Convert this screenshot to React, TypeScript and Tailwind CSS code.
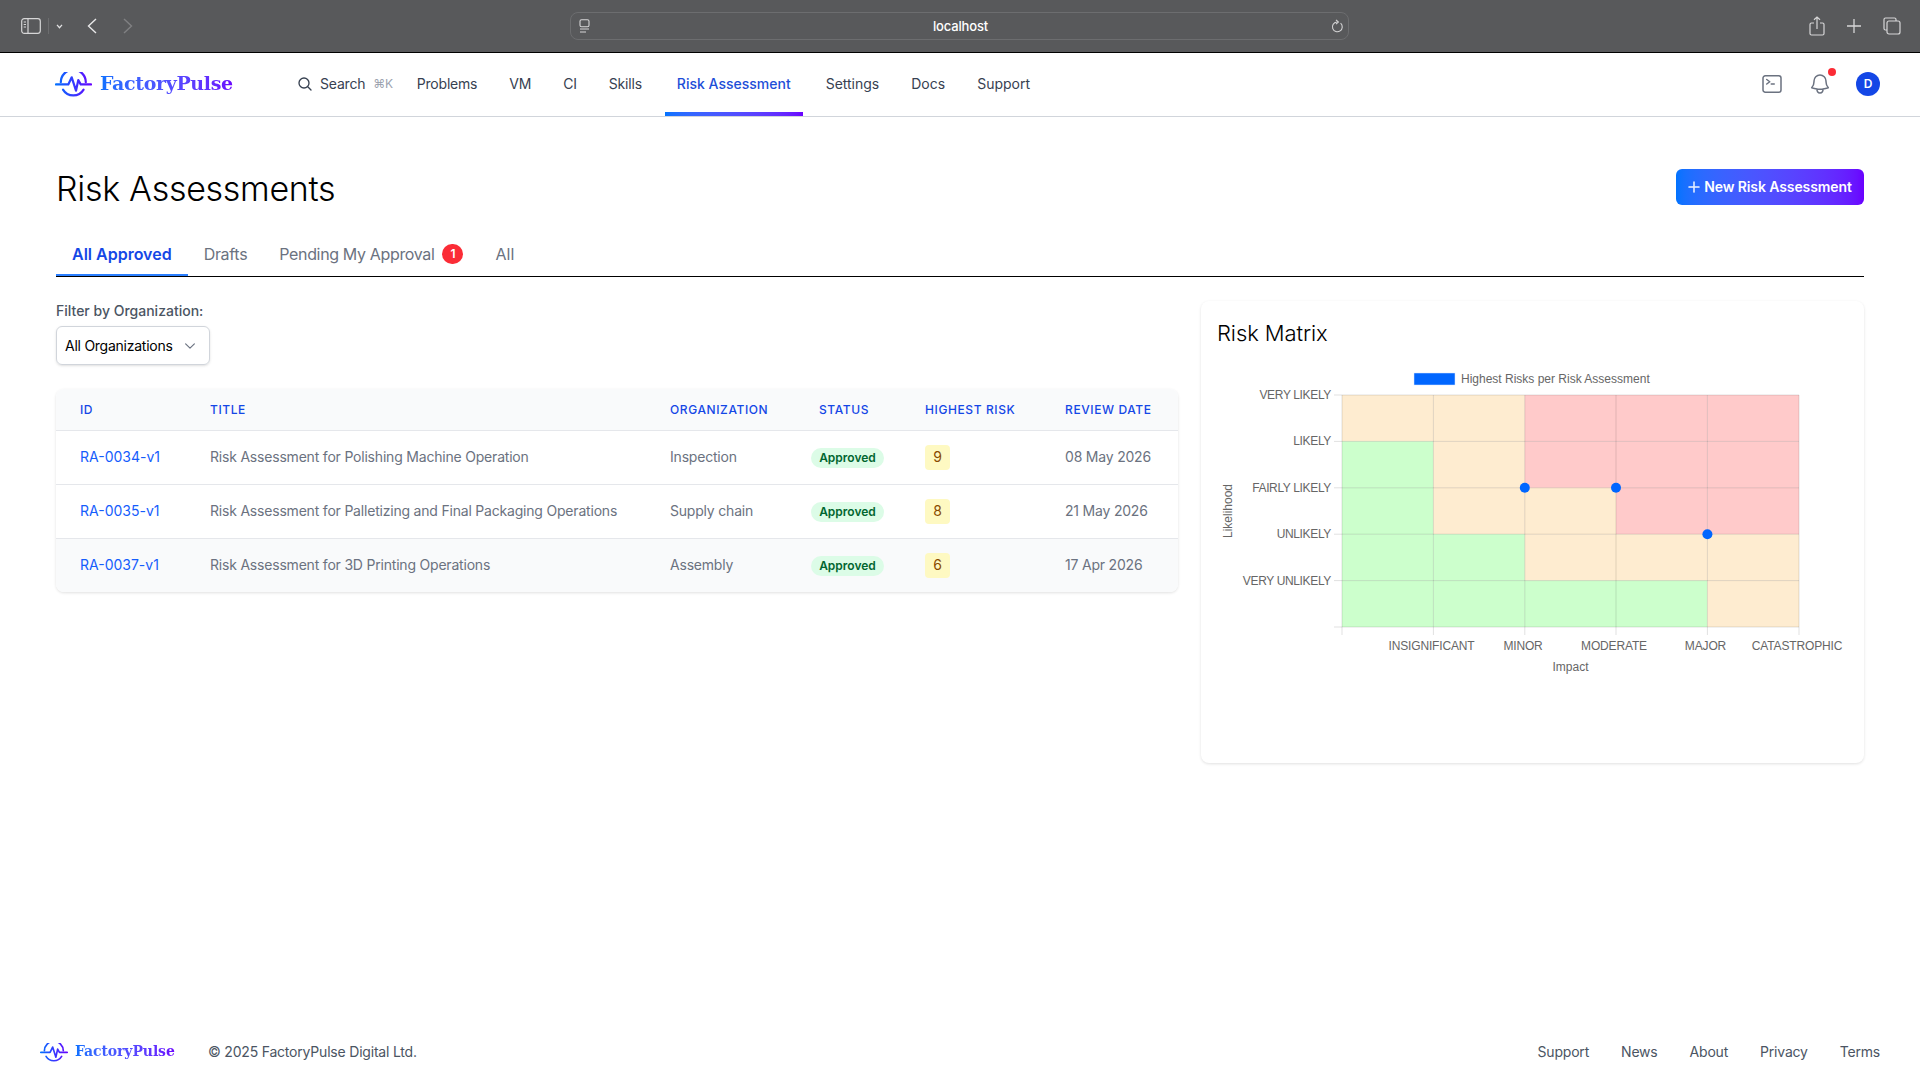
import { useId } from "react";
import {
  HiOutlineBell,
  HiOutlineChevronDown,
  HiOutlineCommandLine,
  HiOutlineMagnifyingGlass,
  HiPlus,
} from "react-icons/hi2";

const navLinks = ["Problems", "VM", "CI", "Skills"];
const navLinksAfter = ["Settings", "Docs", "Support"];
const footerLinks = ["Support", "News", "About", "Privacy", "Terms"];

const rows = [
  { id: "RA-0034-v1", title: "Risk Assessment for Polishing Machine Operation", org: "Inspection", risk: 9, date: "08 May 2026" },
  { id: "RA-0035-v1", title: "Risk Assessment for Palletizing and Final Packaging Operations", org: "Supply chain", risk: 8, date: "21 May 2026" },
  { id: "RA-0037-v1", title: "Risk Assessment for 3D Printing Operations", org: "Assembly", risk: 6, date: "17 Apr 2026" },
];

function LogoMark({ className }: { className: string }) {
  const gid = useId();
  return (
    <svg viewBox="0 0 37 25" fill="none" className={className}>
      <defs>
        <linearGradient id={gid} x1="0" y1="0" x2="37" y2="0" gradientUnits="userSpaceOnUse">
          <stop offset="0" stopColor="#0073ff" />
          <stop offset="1" stopColor="#6a00ff" />
        </linearGradient>
      </defs>
      <g stroke={`url(#${gid})`} strokeWidth="2.2" strokeLinecap="round" strokeLinejoin="round">
        <path d="M5.8 10.2A12 12 0 0 1 30.8 10.2" />
        <path d="M1 12.4H13.3L16.7 5.3L21 18.7L23.3 8L25.7 12.4H36" />
        <path d="M8 17.6A12 12 0 0 0 28.6 17.6" />
      </g>
    </svg>
  );
}

function BrowserBar() {
  return (
    <div className="flex h-[53px] shrink-0 items-center border-b border-black bg-[#58595b]">
      <div className="flex w-[570px] items-center pl-[21px]">
        <svg viewBox="0 0 20 16" fill="none" stroke="#d6d6d7" strokeWidth="1.2" className="h-4 w-5">
          <rect x="0.7" y="0.7" width="18.6" height="14.6" rx="2.5" />
          <path d="M7 0.7V15.3" />
          <path d="M2.7 4H5M2.7 6.5H5M2.7 9H5" />
        </svg>
        <div className="ml-[7px] h-[16px] w-px bg-[#6c6d6f]" />
        <svg viewBox="0 0 8 6" fill="none" stroke="#e2e2e3" strokeWidth="1.5" className="ml-[7px] h-[5px] w-[7px]">
          <path d="M1 1L4 4.5L7 1" />
        </svg>
        <svg viewBox="0 0 10 16" fill="none" stroke="#e8e8e9" strokeWidth="1.4" className="ml-[24px] h-[16px] w-[10px]">
          <path d="M9 1L1.5 8L9 15" />
        </svg>
        <svg viewBox="0 0 10 16" fill="none" stroke="#808183" strokeWidth="1.4" className="ml-[26px] h-[16px] w-[10px]">
          <path d="M1 1L8.5 8L1 15" />
        </svg>
      </div>
      <div className="flex h-[28px] w-[779px] items-center justify-between rounded-lg border border-[#6c6d6f] pl-[8px] pr-[10px]">
        <svg viewBox="0 0 11 14" fill="none" stroke="#d6d6d7" strokeWidth="1.1" className="h-[14px] w-[11px]">
          <rect x="1" y="0.7" width="9" height="7" rx="1.5" />
          <path d="M1 10H10M1 13H7" />
        </svg>
        <span className="pt-[2px] text-[13px] font-medium tracking-[-0.15px] text-white">localhost</span>
        <svg viewBox="0 0 12 14" fill="none" stroke="#d6d6d7" strokeWidth="1.1" className="mr-[-5px] h-[14px] w-[12px]">
          <path d="M9.6 4.2A4.9 4.9 0 1 1 5.8 3" />
          <path d="M5 0.8L7.4 3L5 5.2" />
        </svg>
      </div>
      <div className="flex flex-1 items-center justify-end pr-[19px]">
        <svg viewBox="0 0 16 20" fill="none" stroke="#d6d6d7" strokeWidth="1.2" className="h-[20px] w-[16px]">
          <path d="M5 7H2.5A1.5 1.5 0 0 0 1 8.5V17.5A1.5 1.5 0 0 0 2.5 19H13.5A1.5 1.5 0 0 0 15 17.5V8.5A1.5 1.5 0 0 0 13.5 7H11" />
          <path d="M8 13V1M5 3.8L8 1L11 3.8" />
        </svg>
        <svg viewBox="0 0 14 14" fill="none" stroke="#d6d6d7" strokeWidth="1.3" className="ml-[22px] h-[14px] w-[14px]">
          <path d="M7 0V14M0 7H14" />
        </svg>
        <svg viewBox="0 0 18 18" fill="none" stroke="#d6d6d7" strokeWidth="1.2" className="ml-[22px] h-[18px] w-[18px]">
          <rect x="4" y="4" width="13" height="13" rx="2" />
          <path d="M4 13H2.5A1.5 1.5 0 0 1 1 11.5V2.5A1.5 1.5 0 0 1 2.5 1H11.5A1.5 1.5 0 0 1 13 2.5V4" />
        </svg>
      </div>
    </div>
  );
}

function TopNav() {
  return (
    <header className="flex h-[64px] shrink-0 items-center border-b border-[#d1d5db] bg-white pl-[55px] pr-[40px]">
      <LogoMark className="h-[25px] w-[37px]" />
      <span className="ml-[8px] w-[134px] whitespace-nowrap bg-gradient-to-r from-[#0a72ff] to-[#6a00ff] bg-clip-text pb-[2px] font-['DejaVu_Serif',serif] text-[19px] font-bold tracking-[-0.35px] text-transparent">
        FactoryPulse
      </span>
      <HiOutlineMagnifyingGlass className="mb-[1px] ml-[63px] h-[16px] w-[16px] text-[#374151]" strokeWidth={2} />
      <span className="mb-[1px] ml-[7px] text-sm tracking-[-0.2px] text-[#374151]">Search</span>
      <span className="mb-[1px] ml-[8px] text-xs tracking-[-0.3px] text-[#9ca3af]">⌘K</span>
      <nav className="ml-[8px] flex h-full items-center pb-[1px] text-sm text-[#374151]">
        {navLinks.map((l) => (
          <a key={l} className="px-4 tracking-[-0.2px]">
            {l}
          </a>
        ))}
        <a className="relative mx-[7px] mb-[-1px] flex h-full items-center px-3 pb-[1px] font-medium text-[#1d4ed8]">
          Risk Assessment
          <span className="absolute bottom-0 left-0 h-1 w-full bg-gradient-to-r from-[#0073ff] to-[#6a00ff]" />
        </a>
        {navLinksAfter.map((l) => (
          <a key={l} className="px-4">
            {l}
          </a>
        ))}
      </nav>
      <div className="mb-[1px] ml-auto flex items-center">
        <HiOutlineCommandLine className="h-[24px] w-[24px] text-[#6b7280]" strokeWidth={1.5} />
        <div className="relative ml-[24px]">
          <HiOutlineBell className="h-[24px] w-[24px] text-[#6b7280]" strokeWidth={1.5} />
          <span className="absolute right-[-4px] top-[-4px] h-2 w-2 rounded-full bg-[#fb2c36]" />
        </div>
        <div className="ml-[24px] flex h-6 w-6 items-center justify-center rounded-full bg-[#1447e6] text-xs font-semibold text-white">
          D
        </div>
      </div>
    </header>
  );
}

function RiskTable() {
  return (
    <div className="overflow-hidden rounded-lg shadow-[0_1px_3px_rgba(0,0,0,0.12)]">
      <table className="w-[1122px] table-fixed text-left text-sm tracking-[-0.2px]">
        <thead className="bg-[#f9fafb] text-xs font-medium uppercase tracking-wider text-[#1447e6]">
          <tr className="h-[41px] border-b border-[#e5e7eb]">
            <th className="w-[130px] px-6 pt-[2px] font-medium">ID</th>
            <th className="w-[460px] px-6 pt-[2px] font-medium">Title</th>
            <th className="w-[149px] px-6 pt-[2px] font-medium">Organization</th>
            <th className="w-[106px] px-6 pt-[2px] font-medium">Status</th>
            <th className="w-[140px] px-6 pt-[2px] font-medium">Highest Risk</th>
            <th className="px-6 pt-[2px] font-medium">Review Date</th>
          </tr>
        </thead>
        <tbody className="text-[#6b7280]">
          {rows.map((r, i) => (
            <tr key={r.id} className={i === 2 ? "h-[54px] bg-[#f9fafb]" : "h-[54px] border-b border-[#e5e7eb]"}>
              <td className="px-6 tracking-normal text-[#155dfc]">{r.id}</td>
              <td className="whitespace-nowrap px-6">{r.title}</td>
              <td className="px-6">{r.org}</td>
              <td className="px-4">
                <span className="inline-flex h-5 w-[73px] items-center justify-center rounded-full bg-[#dcfce7] text-xs font-semibold tracking-normal text-[#016630]">
                  Approved
                </span>
              </td>
              <td className="px-6">
                <span className="flex h-[25px] w-[25px] items-center justify-center rounded bg-[#fef9c2] text-sm text-[#894b00]">
                  {r.risk}
                </span>
              </td>
              <td className="px-6">{r.date}</td>
            </tr>
          ))}
        </tbody>
      </table>
    </div>
  );
}

const matrix = [
  ["o", "o", "r", "r", "r"],
  ["g", "o", "r", "r", "r"],
  ["g", "o", "o", "r", "r"],
  ["g", "g", "o", "o", "o"],
  ["g", "g", "g", "g", "o"],
];
const cellFill: Record<string, string> = { o: "#feecd0", r: "#ffcaca", g: "#ccffcc" };
const xs = [1342, 1433.4, 1524.8, 1616, 1707.4, 1799];
const ys = [395, 441.4, 487.8, 534.2, 580.6, 627];
const yLabels = ["VERY LIKELY", "LIKELY", "FAIRLY LIKELY", "UNLIKELY", "VERY UNLIKELY"];
const xLabels = [
  ["INSIGNIFICANT", 1431.5],
  ["MINOR", 1523],
  ["MODERATE", 1614],
  ["MAJOR", 1705.5],
  ["CATASTROPHIC", 1797],
] as const;

// chart is drawn in page coordinates, the viewBox starts where the svg sits
function RiskChart() {
  return (
    <svg
      viewBox="1217 360 631 320"
      className="mt-[11px] block h-[320px] w-[631px] font-['Liberation_Sans',sans-serif]"
      fill="#666666"
      fontSize="12"
    >
      <rect x="1414" y="373" width="41" height="12" fill="#0066ff" stroke="#dbe8ff" strokeWidth="0.5" />
      <text x="1461" y="383">Highest Risks per Risk Assessment</text>
      {matrix.map((row, ri) =>
        row.map((c, ci) => (
          <rect key={`${ri}-${ci}`} x={xs[ci]} y={ys[ri]} width={xs[ci + 1] - xs[ci]} height={ys[ri + 1] - ys[ri]} fill={cellFill[c]} />
        )),
      )}
      <g stroke="rgba(0,0,0,0.12)" strokeWidth="1">
        {xs.map((x) => (
          <line key={x} x1={x} x2={x} y1={395} y2={635} />
        ))}
        {ys.map((y) => (
          <line key={y} x1={1334} x2={1799} y1={y} y2={y} />
        ))}
      </g>
      {yLabels.map((l, i) => (
        <text key={l} x="1331" y={ys[i] + 4} textAnchor="end" letterSpacing="-0.35">
          {l}
        </text>
      ))}
      {xLabels.map(([l, x]) => (
        <text key={l} x={x} y="650" textAnchor="middle" letterSpacing="-0.15">
          {l}
        </text>
      ))}
      <text x="1570.5" y="671" textAnchor="middle">
        Impact
      </text>
      <text transform="translate(1232 511) rotate(-90)" textAnchor="middle">
        Likelihood
      </text>
      <circle cx="1524.8" cy="487.8" r="5" fill="#0066ff" />
      <circle cx="1616" cy="487.8" r="5" fill="#0066ff" />
      <circle cx="1707.4" cy="534.2" r="5" fill="#0066ff" />
    </svg>
  );
}

export default function App() {
  return (
    <div className="flex min-h-screen flex-col bg-white font-['Inter',sans-serif] text-black">
      <BrowserBar />
      <TopNav />

      <main className="flex-1 px-14 pt-[52px]">
        <div className="flex items-start justify-between">
          <h1 className="text-[34px] font-light leading-10 tracking-[-0.3px]">Risk Assessments</h1>
          <button className="flex h-9 w-[188px] items-center justify-center gap-[2px] rounded-md bg-gradient-to-r from-[#0073ff] to-[#6a00ff] pr-[2px] text-sm font-semibold tracking-[-0.1px] text-white">
            <HiPlus className="h-4 w-4" strokeWidth={0.6} />
            New Risk Assessment
          </button>
        </div>

        <div className="mt-[20px] flex h-[48px] border-b border-black">
          <a className="flex items-center border-b-2 border-[#2b7fff] px-4 pt-[5px] font-semibold text-[#1447e6]">All Approved</a>
          <a className="flex items-center px-4 pb-[2px] pt-[5px] tracking-[-0.3px] text-[#6b7280]">Drafts</a>
          <a className="flex items-center px-4 pb-[2px] pt-[5px] tracking-[-0.35px] text-[#6b7280]">
            Pending My Approval
            <span className="ml-2 flex h-5 w-[21px] items-center justify-center rounded-full bg-[#fb2c36] text-xs font-semibold text-white">
              1
            </span>
          </a>
          <a className="flex items-center px-4 pb-[2px] pt-[5px] text-[#6b7280]">All</a>
        </div>

        <div className="mt-[24px] flex items-start gap-[23px]">
          <div className="w-[1122px]">
            <label className="block text-sm font-medium text-[#4b5563]">Filter by Organization:</label>
            <div className="mt-[5px] flex h-[39px] w-[154px] items-center justify-between rounded-md border border-[#d1d5db] pl-[8px] pr-[12px] text-sm tracking-[-0.25px] shadow-sm">
              All Organizations
              <HiOutlineChevronDown className="h-[14px] w-[14px] text-[#6b7280]" strokeWidth={2} />
            </div>
            <div className="mt-[24px]">
              <RiskTable />
            </div>
          </div>

          <section className="h-[462px] flex-1 rounded-lg bg-white px-4 pt-[16px] shadow-[0_1px_3px_rgba(0,0,0,0.12)]">
            <h2 className="text-[22px] font-light leading-8 tracking-[-0.1px]">Risk Matrix</h2>
            <RiskChart />
          </section>
        </div>
      </main>

      <footer className="flex h-14 shrink-0 items-center px-10 text-sm tracking-[-0.2px] text-[#4b5563]">
        <LogoMark className="h-[19px] w-[28px]" />
        <span className="ml-[7px] w-[100px] whitespace-nowrap bg-gradient-to-r from-[#0a72ff] to-[#6a00ff] bg-clip-text pb-[2px] font-['DejaVu_Serif',serif] text-[14px] font-bold tracking-[-0.1px] text-transparent">
          FactoryPulse
        </span>
        <span className="ml-[33px]">© 2025 FactoryPulse Digital Ltd.</span>
        <div className="ml-auto flex gap-8">
          {footerLinks.map((l) => (
            <a key={l}>{l}</a>
          ))}
        </div>
      </footer>
    </div>
  );
}
